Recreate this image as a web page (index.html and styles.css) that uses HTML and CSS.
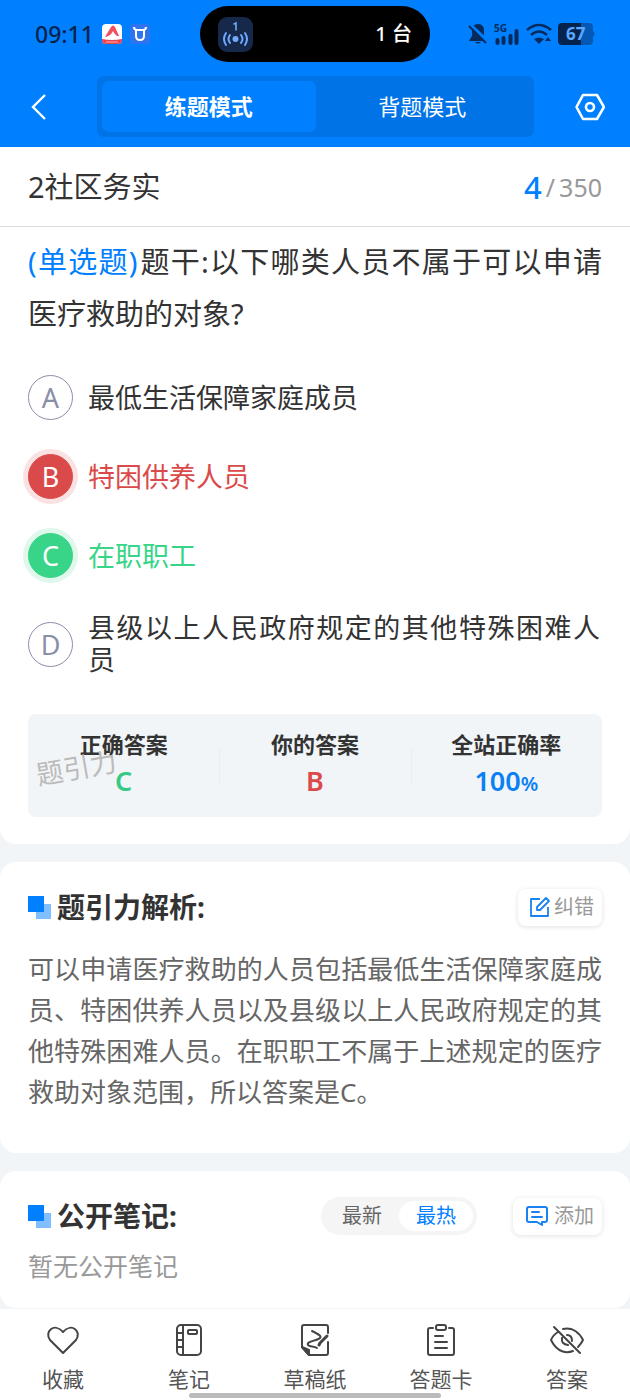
FILE: index.html
```html
<!DOCTYPE html>
<html lang="zh-CN">
<head>
    <meta charset="UTF-8">
    <meta name="viewport" content="width=device-width, initial-scale=1">
    <title>练题模式</title>
    <link rel="stylesheet" href="styles.css">
</head>
<body>
    <header class="header">
        <div class="status-bar">
            <div class="status-left">
                <span>09:11</span>
                <svg width="20" height="20" viewBox="0 0 20 20">
                    <rect width="20" height="20" rx="4" fill="#fff"/>
                    <path d="M0 15q10 2 20 0v1a4 4 0 0 1-4 4H4a4 4 0 0 1-4-4z" fill="#ee4250"/>
                    <path d="M3 13 9 3q2-3 4 0l4 9q-3 1-6-5-2 5-8 6z" fill="#f0505c"/>
                    <path d="M4 18h12" stroke="#f9b5ba"/>
                </svg>
                <svg width="20" height="20" viewBox="0 0 20 20">
                    <rect width="20" height="20" rx="4" fill="#2f74ee"/>
                    <path d="M4 3q0 3 3 3h6q3 0 3-3M6 6v6q0 4 4 4t4-4V6" fill="none" stroke="#fff" stroke-width="2"/>
                </svg>
            </div>
            <div class="island">
                <svg width="35" height="35" viewBox="0 0 35 35" fill="none" stroke="#6fa8ff" stroke-width="2" stroke-linecap="round">
                    <rect width="35" height="35" rx="9" fill="#16294a" stroke="none"/>
                    <path d="M16 7l2-1v7" stroke-width="1.6"/>
                    <circle cx="17.500" cy="22" r="3" fill="#6fa8ff" stroke="none"/>
                    <path d="M12 18q-3 4 0 8M23 18q3 4 0 8M8 16q-4 6 0 12M27 16q4 6 0 12"/>
                </svg>
                <span>1 台</span>
            </div>
            <div class="status-right">
                <svg width="20" height="22" viewBox="0 0 20 22">
                    <path d="M10 1c-4 0-6 3-6 6v6l-3 5h18l-3-5V7c0-3-2-6-6-6zM7 19h6q-3 3-6 0z" fill="#062a5c"/>
                    <path d="M1 1l19 18" stroke="#0080ff" stroke-width="4"/>
                    <path d="M1 3l17 17" stroke="#062a5c" stroke-width="2"/>
                </svg>
                <svg width="26" height="24" viewBox="0 0 26 24">
                    <text class="signal-text" x="0" y="10">5G</text>
                    <path d="M3.500 21v-3M9.500 21v-5M16.500 21v-7M22.500 21V9" stroke="#062a5c" stroke-width="4" stroke-linecap="round"/>
                </svg>
                <svg width="26" height="22" viewBox="0 0 26 22" fill="none" stroke="#062a5c" stroke-width="2.600">
                    <path d="M1 7q12-10 24 0M5 12q8-7 16 0"/>
                    <path d="M8 16q5-3 10 0l-5 5z" fill="#062a5c" stroke="none"/>
                    <path d="M22 14l3 4h-6z" fill="#062a5c" stroke="none"/>
                </svg>
                <svg width="37" height="22" viewBox="0 0 37 22">
                    <path d="M23 0h8q4 0 4 4v14q0 4-4 4h-8zM35 8q3 3 0 6z" fill="#0559b5"/>
                    <path d="M23 0H4Q0 0 0 4v14q0 4 4 4h19z" fill="#06234d"/>
                    <text class="battery-text" x="8" y="17">67</text>
                </svg>
            </div>
        </div>
        <nav class="nav">
            <button class="icon-btn" aria-label="返回">
                <svg width="16" height="28" viewBox="0 0 16 28" fill="none" stroke="#fff" stroke-width="2.400">
                    <path d="M14 2 2 14l12 12"/>
                </svg>
            </button>
            <div class="modes">
                <button class="mode active">练题模式</button>
                <button class="mode">背题模式</button>
            </div>
            <button class="icon-btn" aria-label="设置">
                <svg width="30" height="28" viewBox="0 0 30 28" fill="none" stroke="#fff" stroke-width="2.600" stroke-linejoin="round">
                    <path d="M8 2h14l7 12-7 12H8L1.500 14z"/>
                    <circle cx="15" cy="14" r="4"/>
                </svg>
            </button>
        </nav>
    </header>

    <main>
        <section class="card question-card">
            <div class="subject">
                <h1>2社区务实</h1>
                <div class="progress"><b>4</b><i>/</i><span>350</span></div>
            </div>

            <p class="question"><span class="type">(单选题)</span>题干:以下哪类人员不属于可以申请医疗救助的对象?</p>

            <div class="options">
                <button class="option">
                    <span class="letter">A</span>
                    <span class="text">最低生活保障家庭成员</span>
                </button>
                <button class="option wrong">
                    <span class="letter">B</span>
                    <span class="text">特困供养人员</span>
                </button>
                <button class="option right">
                    <span class="letter">C</span>
                    <span class="text">在职职工</span>
                </button>
                <button class="option">
                    <span class="letter">D</span>
                    <span class="text">县级以上人民政府规定的其他特殊困难人员</span>
                </button>
            </div>

            <div class="result">
                <div class="result-item">
                    <span>正确答案</span>
                    <strong class="green">C</strong>
                </div>
                <div class="result-item">
                    <span>你的答案</span>
                    <strong class="red">B</strong>
                </div>
                <div class="result-item">
                    <span>全站正确率</span>
                    <strong class="blue">100<small>%</small></strong>
                </div>
                <div class="watermark">题引力</div>
            </div>
        </section>

        <section class="card">
            <div class="card-head">
                <svg width="23" height="23" viewBox="0 0 23 23">
                    <rect x="8" y="8" width="15" height="15" fill="#80bfff"/>
                    <rect width="16" height="16" fill="#0080ff"/>
                </svg>
                <h2>题引力解析:</h2>
                <button class="small-btn">
                    <svg width="22" height="22" viewBox="0 0 22 22" fill="none" stroke="#1a82f0" stroke-width="1.800" stroke-linejoin="round">
                        <path d="M11 3H2v17h17v-9"/>
                        <path d="M8 14v-3l9-9 3 3-9 9z"/>
                    </svg>
                    纠错
                </button>
            </div>
            <p class="analysis">可以申请医疗救助的人员包括最低生活保障家庭成员、特困供养人员以及县级以上人民政府规定的其他特殊困难人员。在职职工不属于上述规定的医疗救助对象范围，所以答案是C。</p>
        </section>

        <section class="card notes">
            <div class="card-head">
                <svg width="23" height="23" viewBox="0 0 23 23">
                    <rect x="8" y="8" width="15" height="15" fill="#80bfff"/>
                    <rect width="16" height="16" fill="#0080ff"/>
                </svg>
                <h2>公开笔记:</h2>
                <div class="sort">
                    <button>最新</button>
                    <button class="active">最热</button>
                </div>
                <button class="small-btn add">
                    <svg width="22" height="20" viewBox="0 0 22 20" fill="none" stroke="#1a82f0" stroke-width="2" stroke-linejoin="round" stroke-linecap="round">
                        <path d="M11 16H3q-2 0-2-2V3q0-2 2-2h16q2 0 2 2v11q0 2-2 2h-3v3l-5-3"/>
                        <path d="M6 6h7M6 11h10"/>
                    </svg>
                    添加
                </button>
            </div>
            <p class="empty">暂无公开笔记</p>
        </section>
    </main>

    <footer class="tab-bar">
        <button class="tab">
            <svg width="34" height="34" viewBox="0 0 34 34">
                <path d="M17 30 4 17C-2 9 8-1 17 9c9-10 19 0 13 8z"/>
            </svg>
            收藏
        </button>
        <button class="tab">
            <svg width="34" height="34" viewBox="0 0 34 34">
                <rect x="5" y="2" width="24" height="30" rx="4"/>
                <path d="M11 2v30M5 10h6M5 17h6M5 24h6"/>
                <rect x="16" y="7" width="9" height="4" rx="1"/>
            </svg>
            笔记
        </button>
        <button class="tab">
            <svg width="34" height="34" viewBox="0 0 34 34">
                <path d="M30 10V4q0-2-2-2H6Q4 2 4 4v20l7 8h17q2 0 2-2V19"/>
                <path d="M4 24l7 3v5z" fill="#444"/>
                <path d="M14 8c6 3 10 5 8 7-3 3-14 3-12 7 1 2 6 1 9 3"/>
                <path d="M21 22l1-2 7-7" stroke-width="3"/>
            </svg>
            草稿纸
        </button>
        <button class="tab">
            <svg width="34" height="34" viewBox="0 0 34 34">
                <path d="M9 5H6Q4 5 4 7v23q0 2 2 2h22q2 0 2-2V7q0-2-2-2h-3"/>
                <rect x="12" y="2" width="10" height="5" rx="2"/>
                <path d="M11 13h8M11 19h12M11 25h12"/>
            </svg>
            答题卡
        </button>
        <button class="tab">
            <svg width="36" height="34" viewBox="0 0 36 34">
                <path d="M9 9q-5 3-7 8c7 14 17 13 22 11M14 6c9-2 16 3 20 11q-2 4-5 7"/>
                <path d="M5 4l26 26M13 15q-1 6 6 7M18 12q5 0 5 6"/>
            </svg>
            答案
        </button>
        <div class="home-line"></div>
    </footer>
</body>
</html>
```
FILE: styles.css
```css
* {
    box-sizing: border-box;
}
body {
    margin: 0;
    min-height: 100vh;
    display: flex;
    flex-direction: column;
    background-color: #f1f5f8;
    color: #333;
    font-family: "Noto Sans", "Noto Sans CJK SC", sans-serif;
}
h1, h2, p {
    margin: 0;
}
button {
    padding: 0;
    border: none;
    background: none;
    color: inherit;
    font-family: inherit;
    cursor: pointer;
}
svg {
    display: block;
    flex: none;
}
main {
    flex: 1;
    display: flex;
    flex-direction: column;
    gap: 18px;
}

/* Header */
.header {
    background-color: #0080ff;
    padding-bottom: 10px;
}
.status-bar {
    display: grid;
    grid-template-columns: 1fr 230px 1fr;
    align-items: center;
    height: 68px;
    margin-bottom: 8px;
    color: #06234d;
}
.status-left {
    display: flex;
    align-items: center;
    gap: 8px;
    padding-left: 35px;
    font-size: 23px;
    font-weight: 500;
}
.status-right {
    display: flex;
    align-items: center;
    justify-content: flex-end;
    gap: 6px;
    padding-right: 35px;
}
.signal-text {
    font-size: 10px;
    font-weight: bold;
    fill: #062a5c;
}
.battery-text {
    font-size: 17px;
    font-weight: bold;
    fill: #5aa8ff;
}
.island {
    display: flex;
    align-items: center;
    justify-content: space-between;
    height: 56px;
    padding: 0 18px;
    border-radius: 28px;
    background-color: #000;
    color: #fff;
    font-size: 20px;
    font-weight: 500;
    line-height: 24px;
}
.nav {
    display: flex;
    align-items: center;
    padding: 0 25px 0 31px;
}
.modes {
    flex: 1;
    display: flex;
    margin: 0 41px 0 50px;
    padding: 5px;
    border-radius: 7px;
    background-color: #0073e6;
}
.mode {
    flex: 1;
    height: 51px;
    padding-bottom: 4px;
    border-radius: 7px;
    color: #fff;
    font-size: 22px;
}
.mode.active {
    background-color: #0080ff;
    font-weight: bold;
}

/* Cards */
.card {
    padding: 27px 28px 40px;
    border-radius: 16px;
    background-color: #fff;
}
.question-card {
    padding: 0 28px 27px;
    border-radius: 0 0 16px 16px;
}
.subject {
    display: flex;
    align-items: center;
    justify-content: space-between;
    height: 80px;
    margin: 0 -28px;
    padding: 0 28px;
    border-bottom: 1px solid #ddd;
}
.subject h1 {
    font-size: 29px;
    font-weight: normal;
    line-height: 40px;
}
.progress {
    display: flex;
    align-items: center;
    color: #999;
    font-size: 25px;
    line-height: 40px;
}
.progress b {
    color: #0080ff;
    font-size: 31px;
    font-weight: 500;
}
.progress i {
    padding: 0 4px;
    font-style: normal;
}
.question {
    padding-top: 9px;
    font-size: 29px;
    line-height: 52px;
    text-align: justify;
}
.type {
    margin-right: 2px;
    color: #0080ff;
}

/* Options */
.options {
    display: flex;
    flex-direction: column;
    gap: 34px;
    padding: 35px 0 38px;
}
.option {
    display: flex;
    align-items: center;
    gap: 15px;
    padding-right: 2px;
    font-size: 27px;
    line-height: 32px;
    text-align: justify;
}
.letter {
    flex: none;
    width: 45px;
    height: 45px;
    border: 1px solid #8a8fa8;
    border-radius: 50%;
    color: #8a8fa8;
    line-height: 43px;
    text-align: center;
}
.wrong {
    color: #db4a4a;
}
.right {
    color: #38d588;
}
.wrong .letter {
    border-color: #db4a4a;
    background-color: #db4a4a;
    box-shadow: 0 0 0 5px #fae2e2;
    color: #fff;
}
.right .letter {
    border-color: #38d588;
    background-color: #38d588;
    box-shadow: 0 0 0 5px #dff8eb;
    color: #fff;
}

/* Answer summary */
.result {
    position: relative;
    display: grid;
    grid-template-columns: 1fr 1fr 1fr;
    padding: 14px 0 15px;
    border-radius: 8px;
    background-color: #f1f5f8;
}
.result-item {
    display: flex;
    flex-direction: column;
    text-align: center;
    font-size: 22px;
    font-weight: bold;
    line-height: 32px;
}
.result-item + .result-item {
    background: linear-gradient(#e8edf1, #e8edf1) left center / 1px 36px no-repeat;
}
.result-item strong {
    font-size: 27px;
    font-weight: 600;
    line-height: 42px;
}
.result-item small {
    font-size: 20px;
    line-height: 20px;
}
.green {
    color: #38c987;
}
.red {
    color: #db4a4a;
}
.blue {
    color: #0a80f5;
}
.watermark {
    position: absolute;
    left: 8px;
    top: 34px;
    color: #bbb;
    font-size: 27px;
    line-height: 40px;
    transform: rotate(-10deg);
}

/* Analysis and notes */
.card-head {
    display: flex;
    align-items: center;
    height: 36px;
}
.card-head h2 {
    flex: 1;
    padding-left: 6px;
    font-size: 28px;
    line-height: 36px;
}
.small-btn {
    display: flex;
    align-items: center;
    gap: 3px;
    height: 37px;
    padding: 0 8px 0 11px;
    border-radius: 8px;
    box-shadow: 0 1px 5px rgba(0, 0, 0, 0.12);
    color: #999;
    font-size: 20px;
    line-height: 24px;
}
.small-btn.add {
    gap: 6px;
    margin-left: 36px;
    padding-left: 13px;
}
.analysis {
    padding-top: 24px;
    color: #666;
    font-size: 26px;
    line-height: 41px;
    text-align: justify;
}
.sort {
    display: flex;
    padding: 4px;
    border-radius: 19px;
    background-color: #f5f5f5;
}
.sort button {
    width: 74px;
    height: 30px;
    border-radius: 15px;
    color: #666;
    font-size: 20px;
    line-height: 30px;
}
.sort .active {
    background-color: #fff;
    color: #0080ff;
}
.notes {
    padding-bottom: 22px;
}
.empty {
    padding-top: 12px;
    color: #999;
    font-size: 25px;
    line-height: 40px;
}

/* Bottom bar */
.tab-bar {
    position: sticky;
    bottom: 0;
    display: grid;
    grid-template-columns: repeat(5, 1fr);
    padding: 14px 0 9px;
    background-color: #fff;
}
.tab {
    display: flex;
    flex-direction: column;
    align-items: center;
    gap: 10px;
    color: #555;
    font-size: 21px;
    line-height: 24px;
}
.tab svg {
    fill: none;
    stroke: #444;
    stroke-width: 2;
    stroke-linecap: round;
    stroke-linejoin: round;
}
.home-line {
    position: absolute;
    left: 30%;
    right: 30%;
    bottom: 2px;
    height: 5px;
    border-radius: 3px;
    background-color: #bbb;
}
```
